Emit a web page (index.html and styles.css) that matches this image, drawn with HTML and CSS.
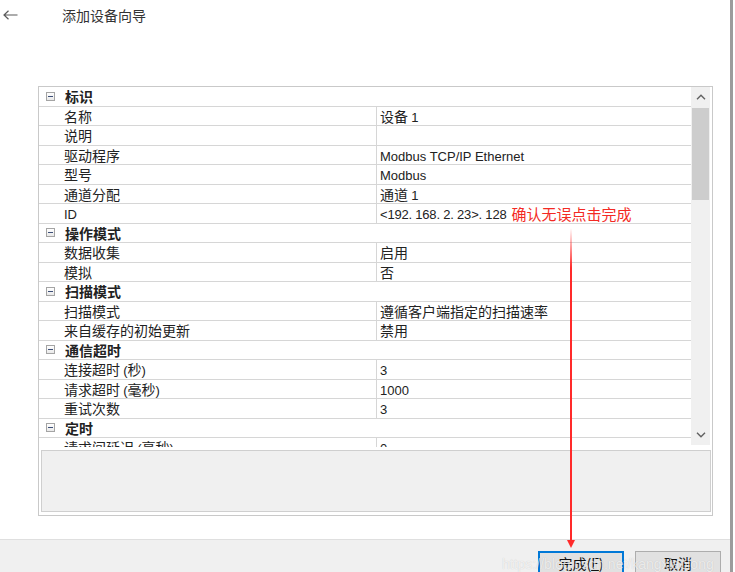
FILE: index.html
```html
<!DOCTYPE html>
<html lang="zh-CN">
<head>
<meta charset="utf-8">
<title>添加设备向导</title>
<link rel="stylesheet" href="styles.css">
</head>
<body>
<div class="window">
  <header class="header">
    <svg class="back" width="15" height="10" viewBox="0 0 15 10"><path d="M14.5 5H1M5.5 0.8L1 5l4.5 4.2" fill="none" stroke="#5a5a5a" stroke-width="1.2"/></svg>
    <span class="title">添加设备向导</span>
  </header>

  <main class="content">
    <div class="grid">
      <div class="grid-body">
        <div class="rows">
          <div class="cat"><span class="toggle"></span><span>标识</span></div>
          <div class="row"><div class="name">名称</div><div class="val">设备 <span class="en">1</span></div></div>
          <div class="row"><div class="name">说明</div><div class="val"></div></div>
          <div class="row"><div class="name">驱动程序</div><div class="val"><span class="en">Modbus TCP/IP Ethernet</span></div></div>
          <div class="row"><div class="name">型号</div><div class="val"><span class="en">Modbus</span></div></div>
          <div class="row"><div class="name">通道分配</div><div class="val">通道 <span class="en">1</span></div></div>
          <div class="row"><div class="name"><span class="en">ID</span></div><div class="val"><span class="en ip">&lt;192. 168. 2. 23&gt;. 128</span><span class="note">确认无误点击完成</span></div></div>
          <div class="cat"><span class="toggle"></span><span>操作模式</span></div>
          <div class="row"><div class="name">数据收集</div><div class="val">启用</div></div>
          <div class="row"><div class="name">模拟</div><div class="val">否</div></div>
          <div class="cat"><span class="toggle"></span><span>扫描模式</span></div>
          <div class="row"><div class="name">扫描模式</div><div class="val">遵循客户端指定的扫描速率</div></div>
          <div class="row"><div class="name">来自缓存的初始更新</div><div class="val">禁用</div></div>
          <div class="cat"><span class="toggle"></span><span>通信超时</span></div>
          <div class="row"><div class="name">连接超时 <span class="en">(</span>秒<span class="en">)</span></div><div class="val"><span class="en">3</span></div></div>
          <div class="row"><div class="name">请求超时 <span class="en">(</span>毫秒<span class="en">)</span></div><div class="val"><span class="en">1000</span></div></div>
          <div class="row"><div class="name">重试次数</div><div class="val"><span class="en">3</span></div></div>
          <div class="cat"><span class="toggle"></span><span>定时</span></div>
          <div class="row"><div class="name">请求间延迟 <span class="en">(</span>毫秒<span class="en">)</span></div><div class="val"><span class="en">0</span></div></div>
        </div>
        <div class="scrollbar">
          <div class="sb-btn"><svg width="10" height="6" viewBox="0 0 10 6"><path d="M1 5.2L5 1.2l4 4" fill="none" stroke="#606060" stroke-width="1.4"/></svg></div>
          <div class="sb-track"><div class="sb-thumb"></div></div>
          <div class="sb-btn"><svg width="10" height="6" viewBox="0 0 10 6"><path d="M1 0.8L5 4.8l4-4" fill="none" stroke="#606060" stroke-width="1.4"/></svg></div>
        </div>
      </div>
      <div class="desc"></div>
    </div>
  </main>

  <footer class="footer">
    <button class="btn btn-default">完成(<u>F</u>)</button>
    <button class="btn">取消</button>
  </footer>
</div>

<svg class="arrow" width="10" height="322" viewBox="0 0 10 322">
  <defs>
    <linearGradient id="fade" x1="0" y1="0" x2="0" y2="40" gradientUnits="userSpaceOnUse">
      <stop offset="0" stop-color="#ff2a2a" stop-opacity="0"/>
      <stop offset="1" stop-color="#ff2a2a" stop-opacity="1"/>
    </linearGradient>
  </defs>
  <rect x="4" y="0" width="2" height="314" fill="url(#fade)"/>
  <polygon points="1,312 9,312 5,320" fill="#ff2a2a"/>
</svg>
<div class="watermark">https://blog.csdn.net/kangxiaolong</div>
</body>
</html>
```

FILE: styles.css
```css
html, body {
  margin: 0;
  padding: 0;
}
body {
  width: 735px;
  height: 572px;
  overflow: hidden;
  position: relative;
  background: #ffffff;
  font-family: "Liberation Sans", "Noto Sans CJK SC", sans-serif;
  font-size: 14px;
  color: #222222;
}
.window {
  width: 730px;
  height: 572px;
  border-right: 3px solid #9c9c9c;
  display: flex;
  flex-direction: column;
  background: #ffffff;
}
.header {
  height: 30px;
  display: flex;
  align-items: center;
  padding-left: 3px;
  flex: none;
}
.back {
  flex: none;
}
.title {
  margin-left: 44px;
  font-family: "Noto Sans CJK SC", sans-serif;
  font-size: 14px;
  color: #333333;
}
.content {
  padding-top: 56px;
  padding-left: 38px;
  flex: none;
}
.grid {
  width: 675px;
  height: 430px;
  box-sizing: border-box;
  border: 1px solid #c9c9c9;
  display: flex;
  flex-direction: column;
}
.grid-body {
  height: 360px;
  display: flex;
  flex: none;
}
.rows {
  flex: 1;
  overflow: hidden;
  font-family: "Noto Sans CJK SC", sans-serif;
}
.en {
  font-family: "Liberation Sans", sans-serif;
  font-size: 13px;
}
.ip {
  letter-spacing: -0.2px;
}
.row, .cat {
  height: 19.5px;
  box-sizing: border-box;
  border-bottom: 1px solid #d6d6d6;
  line-height: 16px;
  white-space: nowrap;
}
.row {
  display: grid;
  grid-template-columns: 338px 1fr;
}
.name {
  padding-left: 25px;
  padding-top: 1px;
  border-right: 1px solid #d6d6d6;
  overflow: hidden;
}
.val {
  padding-left: 3px;
  padding-top: 1px;
  overflow: hidden;
}
.cat {
  display: flex;
  align-items: center;
  padding-left: 7px;
  font-weight: bold;
}
.toggle {
  width: 9px;
  height: 9px;
  box-sizing: border-box;
  border: 1px solid #a4a4a4;
  background: linear-gradient(#ffffff, #e9e9e9);
  margin-right: 10px;
  display: flex;
  align-items: center;
  justify-content: center;
}
.toggle::before {
  content: "";
  width: 5px;
  height: 1px;
  background: #3d4f78;
}
.note {
  color: #f32a24;
  font-size: 15px;
  margin-left: 5px;
  position: relative;
  top: 1px;
}
.scrollbar {
  width: 19px;
  height: 358px;
  margin-right: 2px;
  background: #f0f0f0;
  display: flex;
  flex-direction: column;
}
.sb-btn {
  height: 20px;
  display: flex;
  align-items: center;
  justify-content: center;
  flex: none;
}
.sb-track {
  flex: 1;
  padding: 1px 1px 0 1px;
}
.sb-thumb {
  height: 92px;
  background: #cdcdcd;
}
.desc {
  flex: 1;
  margin: 3px 1px 3px 2px;
  border: 1px solid #cfcfcf;
  background: #f0f0f0;
}
.footer {
  margin-top: auto;
  height: 33px;
  box-sizing: border-box;
  border-top: 1px solid #dfdfdf;
  background: #f0f0f0;
  display: flex;
  justify-content: flex-end;
  align-items: flex-start;
  gap: 11px;
  padding: 11px 9px 0 0;
  overflow: hidden;
}
.btn {
  width: 86px;
  height: 24px;
  flex: none;
  border: 1px solid #adadad;
  background: #e1e1e1;
  font-family: "Noto Sans CJK SC", sans-serif;
  font-size: 14px;
  color: #111111;
  padding: 0;
  line-height: 20px;
}
.btn-default {
  border: 2px solid #0078d7;
}
.arrow {
  position: absolute;
  left: 566px;
  top: 228px;
}
.watermark {
  position: absolute;
  left: 502px;
  top: 556px;
  font-family: "Liberation Sans", sans-serif;
  font-size: 14px;
  color: rgba(255, 255, 255, 0.7);
  text-shadow: 0 0 1px rgba(0, 0, 0, 0.18);
  white-space: nowrap;
}
```
